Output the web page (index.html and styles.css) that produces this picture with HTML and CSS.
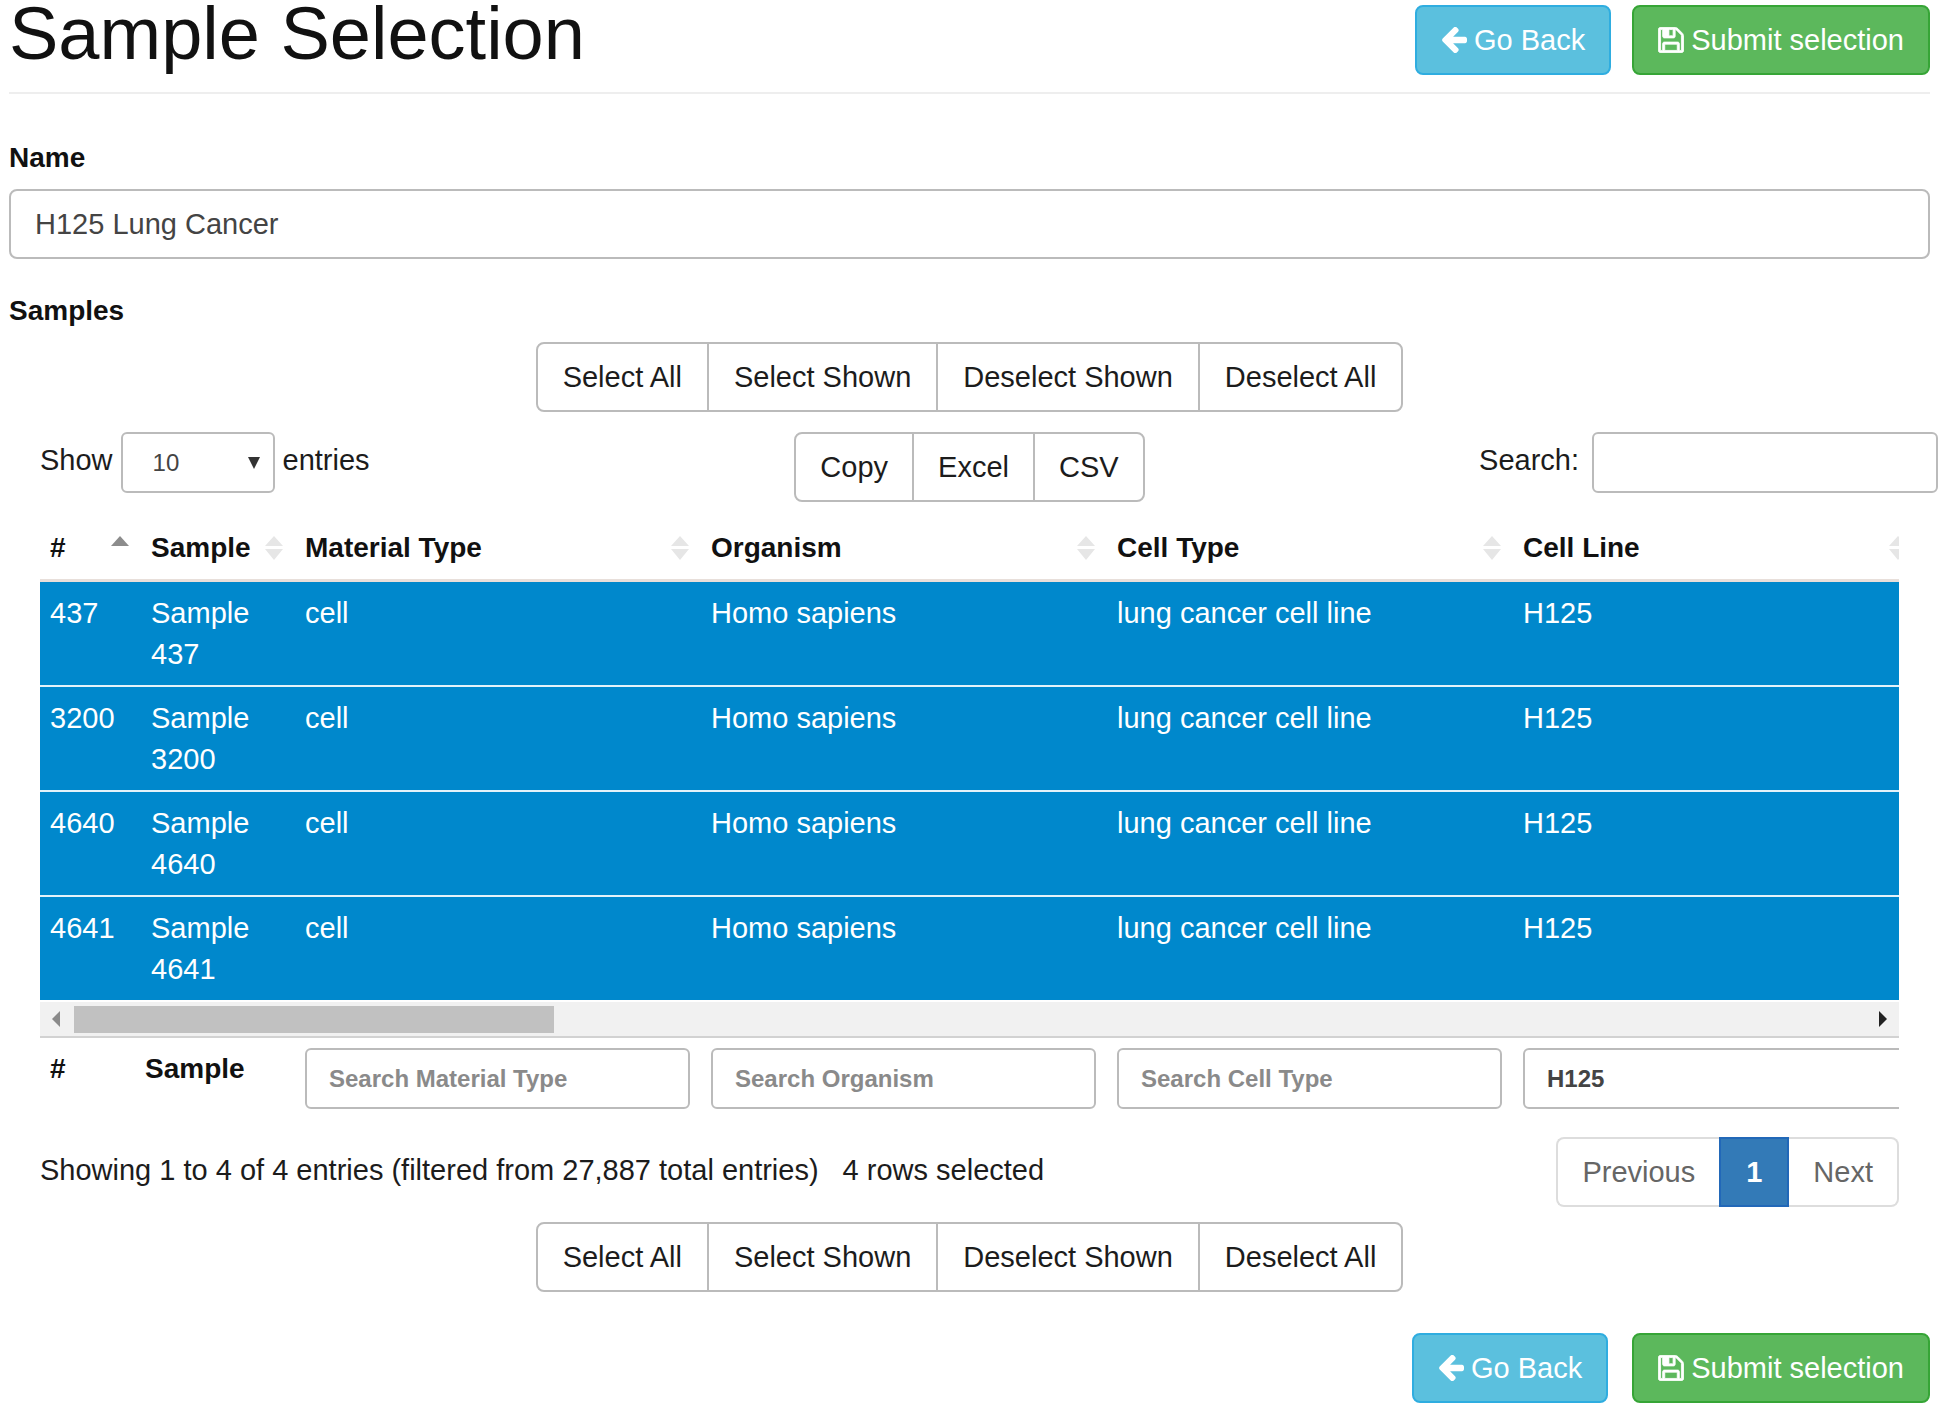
FILE: index.html
```html
<!DOCTYPE html>
<html lang="en">
<head>
<meta charset="utf-8">
<meta name="viewport" content="width=device-width, initial-scale=1">
<title>Sample Selection</title>
<link rel="stylesheet" href="styles.css">
</head>
<body>
<svg class="defs" aria-hidden="true">
  <symbol id="arrow-left" viewBox="128 192 1536 1536"><path d="M1664 896v128q0 53-32.500 90.500t-84.500 37.500h-704l293 294q38 36 38 90t-38 90l-75 76q-37 37-90 37-52 0-91-37l-651-652q-37-37-37-90 0-52 37-91l651-650q38-38 91-38 52 0 90 38l75 74q38 38 38 91t-38 91l-293 293h704q52 0 84.500 37.500t32.500 90.500z"/></symbol>
  <symbol id="floppy" viewBox="98 98 1596 1596"><path stroke="currentColor" stroke-width="50" d="M512 1536h768v-384h-768v384zm896 0h128v-896q0-14-10-38.500t-20-34.500l-281-281q-10-10-34-20t-39-10v416q0 40-28 68t-68 28h-576q-40 0-68-28t-28-68v-416h-128v1280h128v-416q0-40 28-68t68-28h832q40 0 68 28t28 68v416zm-384-928v-320q0-13-9.500-22.500t-22.500-9.500h-192q-13 0-22.500 9.500t-9.500 22.500v320q0 13 9.500 22.500t22.500 9.500h192q13 0 22.500-9.500t9.500-22.500zm640 32v928q0 40-28 68t-68 28h-1344q-40 0-68-28t-28-68v-1344q0-40 28-68t68-28h928q40 0 88 20t76 48l280 280q28 28 48 76t20 88z"/></symbol>
  <symbol id="sort-both" viewBox="0 0 18 24"><path d="M9 0 18 10H0zM0 13h18L9 24z"/></symbol>
  <symbol id="sort-up" viewBox="0 0 18 24"><path d="M9 0 18 10H0z"/></symbol>
</svg>
<main class="page">
  <header class="page-header">
    <h1 class="title">Sample Selection</h1>
    <div class="actions">
      <button type="button" class="btn btn-info"><svg class="icon"><use href="#arrow-left"/></svg>Go Back</button>
      <button type="button" class="btn btn-success"><svg class="icon"><use href="#floppy"/></svg>Submit selection</button>
    </div>
  </header>

  <label class="field-label" for="name">Name</label>
  <input class="name-input" id="name" type="text" value="H125 Lung Cancer">

  <h2 class="field-label samples-label">Samples</h2>
  <section class="samples">
    <div class="btn-group btn-group-wide">
      <button type="button" class="btn">Select All</button>
      <button type="button" class="btn">Select Shown</button>
      <button type="button" class="btn">Deselect Shown</button>
      <button type="button" class="btn">Deselect All</button>
    </div>

    <div class="controls">
      <div class="length">
        <label for="length">Show</label>
        <span class="select-wrap">
          <select id="length" class="small-input"><option>10</option><option>25</option><option>50</option></select>
          <svg class="caret" viewBox="0 0 12 12"><path d="M0 0h12L6 12z"/></svg>
        </span>
        <span>entries</span>
      </div>
      <div class="btn-group">
        <button type="button" class="btn">Copy</button>
        <button type="button" class="btn">Excel</button>
        <button type="button" class="btn">CSV</button>
      </div>
      <div class="filter">
        <label for="search">Search:</label>
        <input id="search" class="small-input" type="search">
      </div>
    </div>

    <div class="scroll">
      <table class="grid">
        <colgroup><col class="c-id"><col class="c-sample"><col><col><col><col></colgroup>
        <thead>
          <tr>
            <th><div class="th">#<svg class="sort sort-on"><use href="#sort-up"/></svg></div></th>
            <th><div class="th">Sample<svg class="sort"><use href="#sort-both"/></svg></div></th>
            <th><div class="th">Material Type<svg class="sort"><use href="#sort-both"/></svg></div></th>
            <th><div class="th">Organism<svg class="sort"><use href="#sort-both"/></svg></div></th>
            <th><div class="th">Cell Type<svg class="sort"><use href="#sort-both"/></svg></div></th>
            <th><div class="th">Cell Line<svg class="sort"><use href="#sort-both"/></svg></div></th>
          </tr>
        </thead>
        <tbody>
          <tr><td>437</td><td>Sample 437</td><td>cell</td><td>Homo sapiens</td><td>lung cancer cell line</td><td>H125</td></tr>
          <tr><td>3200</td><td>Sample 3200</td><td>cell</td><td>Homo sapiens</td><td>lung cancer cell line</td><td>H125</td></tr>
          <tr><td>4640</td><td>Sample 4640</td><td>cell</td><td>Homo sapiens</td><td>lung cancer cell line</td><td>H125</td></tr>
          <tr><td>4641</td><td>Sample 4641</td><td>cell</td><td>Homo sapiens</td><td>lung cancer cell line</td><td>H125</td></tr>
        </tbody>
      </table>
    </div>
    <div class="scrollbar" aria-hidden="true">
      <svg class="scroll-arrow scroll-left" viewBox="0 0 8 16"><path d="M8 0v16L0 8z"/></svg>
      <div class="track"><div class="thumb"></div></div>
      <svg class="scroll-arrow" viewBox="0 0 8 16"><path d="M0 0v16l8-8z"/></svg>
    </div>
    <div class="scroll">
      <table class="grid foot">
        <colgroup><col class="c-id"><col class="c-sample"><col><col><col><col></colgroup>
        <tfoot>
          <tr>
            <th>#</th>
            <th class="foot-sample">Sample</th>
            <th><input class="small-input" type="text" placeholder="Search Material Type" aria-label="Search Material Type"></th>
            <th><input class="small-input" type="text" placeholder="Search Organism" aria-label="Search Organism"></th>
            <th><input class="small-input" type="text" placeholder="Search Cell Type" aria-label="Search Cell Type"></th>
            <th class="foot-last"><input class="small-input" type="text" value="H125" aria-label="Search Cell Line"></th>
          </tr>
        </tfoot>
      </table>
    </div>

    <div class="summary">
      <p class="info"><span>Showing 1 to 4 of 4 entries (filtered from 27,887 total entries)</span><span>4 rows selected</span></p>
      <nav class="pagination" aria-label="Table pages">
        <a class="page-link" href="#">Previous</a>
        <a class="page-link active" href="#">1</a>
        <a class="page-link" href="#">Next</a>
      </nav>
    </div>

    <div class="btn-group btn-group-wide">
      <button type="button" class="btn">Select All</button>
      <button type="button" class="btn">Select Shown</button>
      <button type="button" class="btn">Deselect Shown</button>
      <button type="button" class="btn">Deselect All</button>
    </div>
  </section>

  <footer class="actions actions-bottom">
    <button type="button" class="btn btn-info"><svg class="icon"><use href="#arrow-left"/></svg>Go Back</button>
    <button type="button" class="btn btn-success"><svg class="icon"><use href="#floppy"/></svg>Submit selection</button>
  </footer>
</main>
</body>
</html>
```

FILE: styles.css
```css
* { box-sizing: border-box; }

body {
  margin: 0;
  background: #fff;
  color: #1c1c1c;
  font: 29px/40px "Liberation Sans", Arial, sans-serif;
}

button, input, select { font: inherit; color: inherit; margin: 0; }

.defs { display: none; }
.page { padding: 0 13px 6px 9px; }

.page-header {
  display: flex;
  justify-content: space-between;
  align-items: flex-start;
  height: 94px;
  border-bottom: 2px solid #eee;
}

.title {
  margin: 0;
  font-size: 74px;
  line-height: 68px;
  font-weight: 400;
  color: #111;
}

.actions { display: flex; gap: 21px; margin-top: 5px; }
.actions-bottom { justify-content: flex-end; gap: 24px; margin-top: 41px; }

.btn {
  height: 70px;
  padding: 0 24px;
  border: 2px solid #bbb;
  border-radius: 8px;
  background: #fff;
  white-space: nowrap;
}

.btn-info,
.btn-success {
  display: flex;
  align-items: center;
  gap: 7px;
  color: #fff;
}

.btn-info { background: #5bc0de; border-color: #2fade0; }
.btn-success { background: #5cb85c; border-color: #36a536; }
.icon { width: 26px; height: 26px; fill: currentColor; }

.field-label {
  display: block;
  margin: 44px 0 11px;
  font-size: 28px;
  line-height: 40px;
  font-weight: 700;
  color: #111;
}

.samples-label { margin-top: 32px; }

.name-input {
  display: block;
  width: 100%;
  height: 70px;
  padding: 0 24px;
  border: 2px solid #bbb;
  border-radius: 8px;
  background: #fff;
  color: #444;
}

.samples { padding: 0 31px; }

.btn-group { display: flex; justify-content: center; }
.btn-group .btn { border-radius: 0; }
.btn-group-wide .btn { padding: 0 25px; }
.btn-group .btn + .btn { margin-left: -2px; }
.btn-group .btn:first-child { border-radius: 8px 0 0 8px; }
.btn-group .btn:last-child { border-radius: 0 8px 8px 0; }

.controls {
  display: grid;
  grid-template-columns: 1fr auto 1fr;
  align-items: start;
  margin: 20px 0 11px;
}

.length, .filter { display: flex; align-items: flex-start; gap: 8px; line-height: 57px; }
.filter { justify-self: end; gap: 13px; margin-right: -39px; }
.filter .small-input { width: 346px; }

.small-input {
  width: 100%;
  height: 61px;
  padding: 0 22px;
  border: 2px solid #bbb;
  border-radius: 6px;
  background: #fff;
  color: #444;
  font-size: 24px;
  appearance: none;
}

.select-wrap { position: relative; width: 154px; height: 61px; }
.select-wrap .small-input { display: block; padding-left: 30px; line-height: 56px; }
.caret {
  position: absolute;
  top: 25px;
  right: 15px;
  width: 12px;
  height: 12px;
  fill: #333;
  pointer-events: none;
}

.scroll { overflow: hidden; }

.grid {
  width: 1879px;
  table-layout: fixed;
  border-collapse: separate;
  border-spacing: 0;
}

.c-id { width: 101px; }
.c-sample { width: 154px; }

.grid th {
  padding: 0 11px 0 10px;
  font-size: 28px;
  text-align: left;
  vertical-align: top;
  color: #111;
}

.grid thead th {
  padding: 15px 12px 11px 10px;
  border-bottom: 3px solid #e8dfda;
}

.th { display: flex; justify-content: space-between; align-items: center; white-space: nowrap; }
.sort { flex: none; width: 18px; height: 24px; fill: #e6e6e6; }
.sort-on { fill: #8c8c8c; }

.grid td {
  padding: 11px 10px 10px;
  border-top: 2px solid #e3f2fa;
  background: #0088cc;
  color: #fff;
  line-height: 41px;
  vertical-align: top;
}

.grid tbody tr:first-child td { border-top: 0; }

.scrollbar {
  display: flex;
  align-items: center;
  gap: 14px;
  height: 36px;
  margin-top: 2px;
  padding: 0 12px;
  border-bottom: 2px solid #d2d2d2;
  background: #f1f1f1;
}

.scroll-arrow { width: 8px; height: 16px; fill: #222; }
.scroll-left { fill: #8a8a8a; }
.track { flex: 1; }
.thumb { width: 26.8%; height: 27px; background: #c1c1c1; }

.foot { margin-top: 10px; }
.grid tfoot th { padding-bottom: 1px; line-height: 42px; }
.grid .foot-sample { padding-left: 4px; }
.grid .foot-last { padding-right: 0; }
.foot .small-input { display: block; font-weight: 700; }
.small-input::placeholder { color: #8a8a8a; opacity: 1; }

.summary {
  display: flex;
  justify-content: space-between;
  align-items: flex-start;
  margin: 27px 0 15px;
}

.info { display: flex; gap: 24px; margin: 0; line-height: 66px; }

.pagination { display: flex; }
.page-link {
  height: 70px;
  padding: 0 24px;
  border: 2px solid #ddd;
  color: #666;
  line-height: 66px;
  text-decoration: none;
}
.page-link:first-child { border-right: 0; border-radius: 8px 0 0 8px; }
.page-link:last-child { border-left: 0; border-radius: 0 8px 8px 0; }
.page-link.active {
  padding: 0 25px;
  border-color: #2268b8;
  background: #337ab7;
  color: #fff;
  font-weight: 700;
}
```
